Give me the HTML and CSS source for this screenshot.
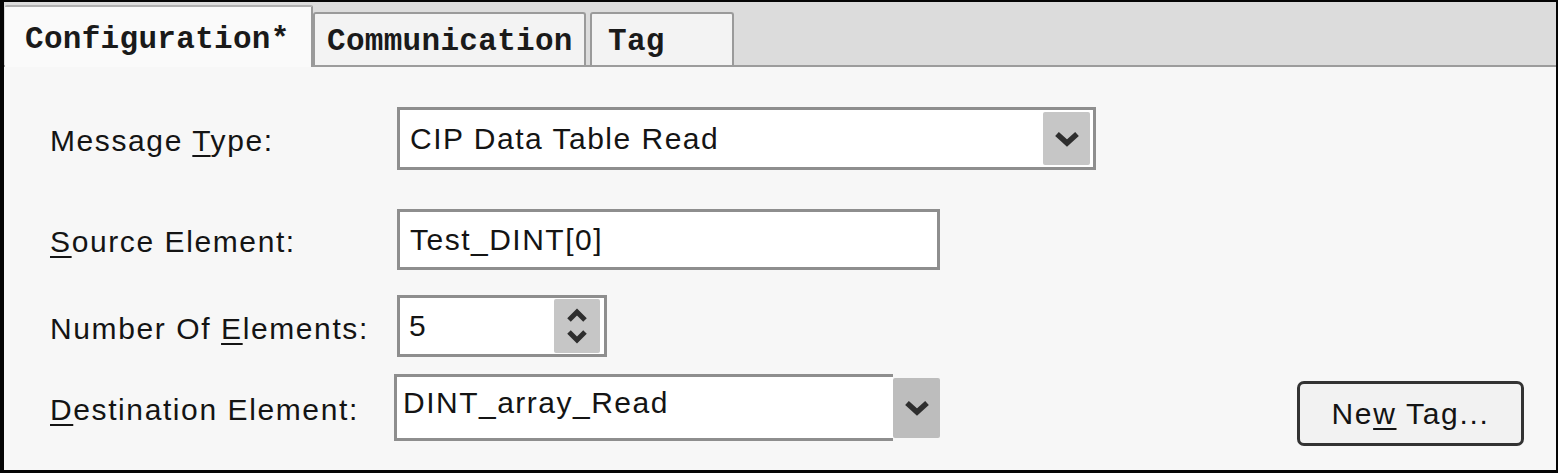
FILE: index.html
```html
<!DOCTYPE html>
<html lang="en">
<head>
    <meta charset="UTF-8">
    <title>Message Configuration</title>
    <link rel="stylesheet" href="styles.css">
</head>
<body>
    <div class="window">
        <div class="tabbar">
            <div class="tab active">Configuration*</div>
            <div class="tab tab-comm">Communication</div>
            <div class="tab tab-tag">Tag</div>
        </div>
        <div class="panel">
            <div class="row row-type">
                <label class="label">Message <u>T</u>ype:</label>
                <div class="field combo">
                    <span class="value">CIP Data Table Read</span>
                    <span class="drop-btn">
                        <svg width="26" height="16" viewBox="0 0 26 16"><polyline points="3,3 13,12 23,3" fill="none" stroke="#2e2e2e" stroke-width="5.5"/></svg>
                    </span>
                </div>
            </div>
            <div class="row row-source">
                <label class="label"><u>S</u>ource Element:</label>
                <div class="field textbox">
                    <span class="value">Test_DINT[0]</span>
                </div>
            </div>
            <div class="row row-count">
                <label class="label">Number Of <u>E</u>lements:</label>
                <div class="field spin">
                    <span class="value">5</span>
                    <span class="spin-btn">
                        <svg width="24" height="44" viewBox="0 0 24 44"><polyline points="4,16 12,8 20,16" fill="none" stroke="#2e2e2e" stroke-width="5"/><polyline points="4,28 12,36 20,28" fill="none" stroke="#2e2e2e" stroke-width="5"/></svg>
                    </span>
                </div>
            </div>
            <div class="row row-dest">
                <label class="label"><u>D</u>estination Element:</label>
                <div class="field dest">
                    <span class="value">DINT_array_Read</span>
                </div>
                <span class="drop-btn dest-btn">
                    <svg width="26" height="16" viewBox="0 0 26 16"><polyline points="3,3 13,12 23,3" fill="none" stroke="#2e2e2e" stroke-width="5.5"/></svg>
                </span>
                <button class="new-tag">Ne<u>w</u> Tag...</button>
            </div>
        </div>
    </div>
</body>
</html>
```

FILE: styles.css
```css
body {
    margin: 0;
    padding: 0;
    background-color: #000;
    font-family: "Liberation Sans", Arial, sans-serif;
    color: #141414;
}
.window {
    box-sizing: border-box;
    width: 1558px;
    height: 473px;
    border-style: solid;
    border-color: #050505;
    border-width: 2px 2px 3px 4px;
    background-color: #f7f7f7;
    display: flex;
    flex-direction: column;
}
/* Tab strip */
.tabbar {
    height: 63px;
    background-color: #dcdcdc;
    border-bottom: 2px solid #9c9c9c;
    display: flex;
    align-items: flex-end;
    padding-left: 1px;
}
.tab {
    box-sizing: border-box;
    font-family: "Liberation Mono", "Courier New", monospace;
    font-weight: bold;
    font-size: 31px;
    letter-spacing: 0.3px;
    color: #1a1a1a;
    height: 53px;
    padding: 10px 12px 0 12px;
    background-color: #f3f3f3;
    border: 2px solid #9a9a9a;
    border-bottom: none;
    border-radius: 3px 3px 0 0;
}
.tab.active {
    height: 62px;
    margin-bottom: -2px;
    width: 308px;
    padding: 15px 0 0 20px;
    background-color: #fafafa;
    border: none;
    border-top: 2px solid #b0b0b0;
    border-right: 2px solid #9a9a9a;
    border-radius: 2px 2px 0 0;
}
.tab-comm {
    width: 273px;
}
.tab-tag {
    width: 144px;
    margin-left: 4px;
    padding-left: 16px;
}
/* Form */
.panel {
    flex: 1;
    display: flex;
    flex-direction: column;
    padding: 40px 32px 0 46px;
}
.row {
    display: flex;
    align-items: center;
}
.row-source { margin-top: 39px; }
.row-count { margin-top: 25px; }
.row-dest { margin-top: 12px; }
.label {
    width: 347px;
    flex: none;
    font-size: 30px;
    letter-spacing: 1.6px;
    padding-top: 5px;
}
.label u, .new-tag u {
    text-underline-offset: 4px;
    text-decoration-thickness: 2px;
}
.field {
    box-sizing: border-box;
    display: flex;
    align-items: center;
    background-color: #fff;
    border: 3px solid #8e8e8e;
    font-size: 30px;
    letter-spacing: 1.5px;
}
.value {
    flex: 1;
}
.combo {
    width: 699px;
    height: 63px;
    padding: 0 3px 0 10px;
}
.drop-btn {
    width: 47px;
    height: 53px;
    background-color: #c6c6c6;
    border-radius: 2px;
    display: flex;
    align-items: center;
    justify-content: center;
}
.textbox {
    width: 543px;
    height: 61px;
    padding: 0 10px;
}
.spin {
    width: 210px;
    height: 62px;
    padding: 0 4px 0 9px;
}
.spin-btn {
    width: 46px;
    height: 54px;
    background-color: #c6c6c6;
    border-radius: 2px;
    display: flex;
    align-items: center;
    justify-content: center;
}
.dest {
    width: 499px;
    height: 67px;
    margin-left: -3px;
    padding: 0 6px 10px 6px;
    border-right: none;
}
.dest-btn {
    height: 60px;
    background-color: #bdbdbd;
}
.new-tag {
    margin-left: auto;
    margin-top: 12px;
    width: 227px;
    height: 65px;
    background-color: #f2f2f2;
    border: 3px solid #333;
    border-radius: 7px;
    font-family: "Liberation Sans", Arial, sans-serif;
    font-size: 30px;
    letter-spacing: 1.7px;
    color: #141414;
    padding: 0;
}
```
